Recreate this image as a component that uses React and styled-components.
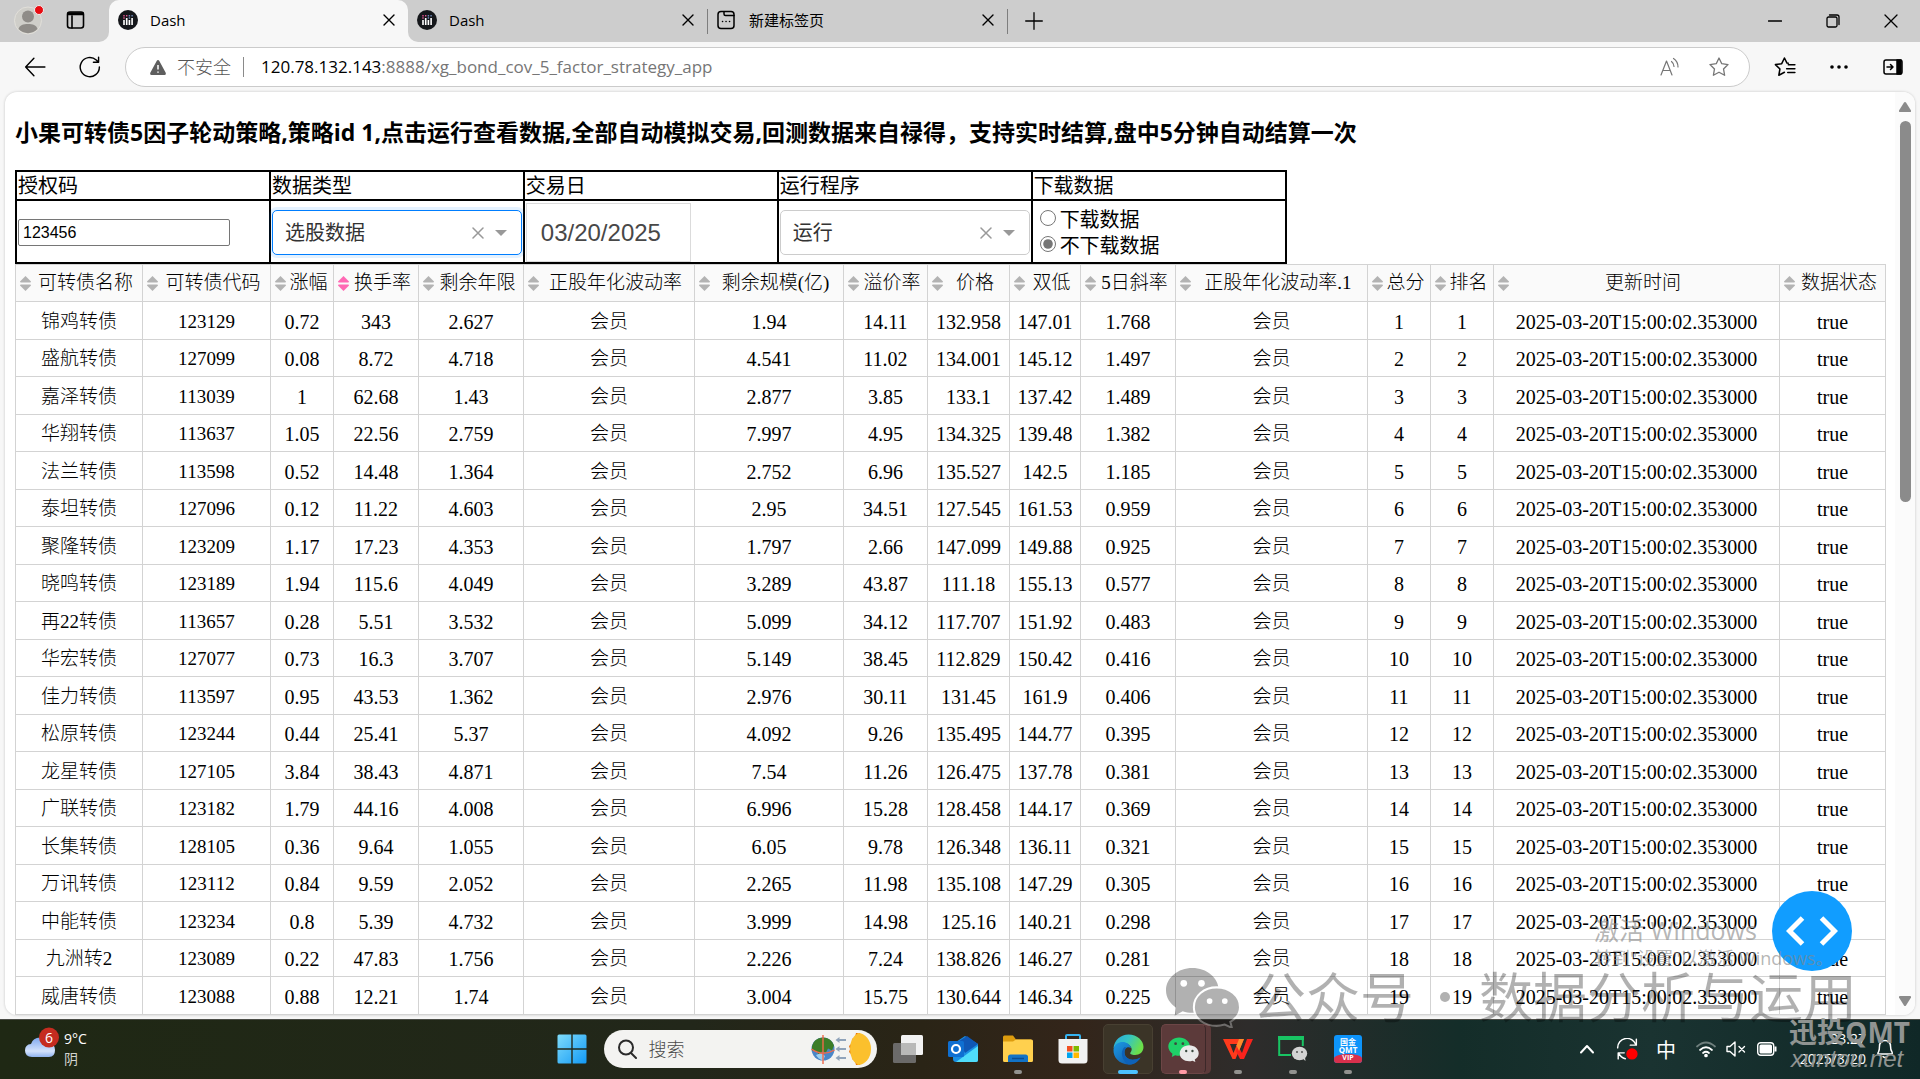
import React, { useState } from "react";
import styled, { createGlobalStyle } from "styled-components";

const ui = `"Open Sans", "Noto Sans CJK SC", sans-serif`;

const GlobalStyle = createGlobalStyle`
  * {
    box-sizing: border-box;
  }

  body {
    margin: 0;
    font-family: ${ui};
    color: #000;
    overflow: hidden;
  }

  button {
    display: flex;
    align-items: center;
    justify-content: center;
    padding: 0;
    border: 0;
    background: transparent;
    color: inherit;
    font-family: inherit;
    flex-shrink: 0;
  }

  svg {
    display: block;
    flex-shrink: 0;
  }
`;

const Desktop = styled.div`
  position: relative;
  display: flex;
  flex-direction: column;
  height: 100vh;
  overflow: hidden;
  background: #f7f7f7;
`;

/* ---------- browser chrome ---------- */

const TabStrip = styled.header`
  display: flex;
  align-items: center;
  flex-shrink: 0;
  height: 42px;
  background: #cdcdcd;
`;

const StripTools = styled.div`
  display: flex;
  align-items: center;
  gap: 21px;
  width: 109px;
  height: 42px;
  padding: 0 0 2px 14px;
  border-radius: 0 0 10px 0;
  background: #cdcdcd;
`;

const Corner = styled.div`
  background: #f7f7f7;
`;

const Tab = styled.div`
  display: flex;
  align-items: center;
  width: 299px;
  height: 42px;
  padding: 0 9px 3px 9px;
  border-radius: ${(props) => (props.$active ? "10px 10px 0 0" : "0")};
  background: ${(props) => (props.$active ? "#f7f7f7" : "transparent")};
  font-size: 15px;
  line-height: 20px;
`;

const TabAfterActive = styled(Tab)`
  border-radius: 0 0 0 10px;
  background: #cdcdcd;
`;

const TabTitle = styled.span`
  flex-grow: 1;
  margin-left: 12px;
`;

const IconButton = styled.button`
  width: ${(props) => props.$w || 20}px;
  height: ${(props) => props.$h || 20}px;
`;

const Separator = styled.span`
  width: 1px;
  height: 25px;
  background: #7e7e7e;
`;

const WindowButtons = styled.div`
  display: flex;
  margin-left: auto;
`;

const Toolbar = styled.div`
  display: flex;
  align-items: center;
  flex-shrink: 0;
  height: 50px;
  padding: 0 0 0 7px;
`;

const AddressBar = styled.div`
  display: flex;
  align-items: center;
  flex-grow: 1;
  height: 40px;
  margin: 0 8px;
  padding: 0 19px 0 24px;
  border: 1px solid #cbcbcb;
  border-radius: 20px;
  background: #fff;
  color: #767676;
  font-size: 17px;
  line-height: 24px;
`;

const Insecure = styled.span`
  margin-left: 11px;
  font-size: 18px;
  font-weight: 300;
  color: #555;
`;

const AddressLine = styled.span`
  width: 1px;
  height: 20px;
  margin: 0 17px 0 12px;
  background: #8a8a8a;
`;

const Url = styled.span`
  flex-grow: 1;

  b {
    font-weight: 400;
    color: #000;
  }
`;

const AddressActions = styled.div`
  display: flex;
  gap: 27px;
`;

const Page = styled.main`
  display: flex;
  flex-grow: 1;
  min-height: 0;
  margin: 0 5px 4px;
  border-radius: 12px;
  background: #fff;
  box-shadow: 0 0 3px rgba(0, 0, 0, 0.2);
  overflow: hidden;
`;

const Content = styled.div`
  flex: 1 1 0;
  min-width: 0;
  padding: 0 10px;
`;

const Scrollbar = styled.div`
  display: flex;
  flex-direction: column;
  align-items: center;
  flex-shrink: 0;
  width: 20px;
  padding: 10px 0 9px;
  background: #fbfbfb;
`;

const Track = styled.div`
  flex-grow: 1;
  width: 11px;
  margin: 9px 0;
`;

const Thumb = styled.div`
  height: 44%;
  border-radius: 6px;
  background: #8b8b8b;
`;

/* ---------- dash page ---------- */

const Title = styled.h3`
  margin: 0;
  padding: 22px 0 20px;
  font-size: 23px;
  line-height: 36px;
  font-weight: 700;
  white-space: nowrap;
`;

const FormTable = styled.table`
  width: 68%;
  table-layout: fixed;
  border: 1px solid #000;
  border-collapse: separate;
  border-spacing: 0;
  font-size: 20px;
  line-height: 26px;

  th,
  td {
    border: 1px solid #000;
    font-weight: 400;
    text-align: left;
  }

  th {
    height: 29px;
    padding: 1px 1px 0;
  }

  td {
    height: 63px;
    padding: 2px 1px 0;
  }
`;

const CodeInput = styled.input`
  display: block;
  width: 212px;
  height: 27px;
  padding: 1px 4px;
  border: 1px solid #767676;
  border-radius: 2px;
  font-family: "Liberation Sans", sans-serif;
  font-size: 16px;
`;

const DateInput = styled.input`
  display: block;
  width: 165px;
  height: 59px;
  padding: 0 14px;
  border: 1px solid #dbdbdb;
  color: #484848;
  font-family: "Liberation Sans", sans-serif;
  font-size: 24px;
`;

const SelectBox = styled.div`
  display: flex;
  align-items: center;
  height: 45px;
  padding-right: 14px;
  border: 1px solid ${(props) => (props.$focused ? "#007eff" : "#ccc")};
  border-radius: 5px;
  box-shadow: ${(props) =>
    props.$focused ? "0 0 0 3px rgba(0, 126, 255, 0.1)" : "none"};
  background: #fff;
`;

const Select = styled.select`
  flex-grow: 1;
  height: 43px;
  padding: 0 12px;
  border: 0;
  outline: 0;
  appearance: none;
  background: transparent;
  color: #333;
  font-family: ${ui};
  font-size: 20px;
`;

const RadioLabel = styled.label`
  display: flex;
  align-items: center;
  height: 26px;
  padding-left: 6px;

  input {
    width: 16px;
    height: 16px;
    margin: 0 4px 3px 0;
    accent-color: #767676;
  }
`;

const DataTable = styled.table`
  width: 100%;
  table-layout: fixed;
  border-collapse: collapse;
  font-family: "Liberation Serif", "Noto Sans CJK SC", serif;
  font-size: 19px;
  font-weight: 300;
  line-height: 24px;

  th,
  td {
    padding: 0;
    border: 1px solid #d3d3d3;
    text-align: center;
    white-space: nowrap;
    font-weight: 300;
  }

  th {
    height: 37px;
    background: #fafafa;
  }

  tbody tr {
    height: 37px;
  }

  tbody tr:nth-child(odd) {
    height: 38px;
  }
`;

const Cell = styled.td`
  && {
    padding-top: 2px;
  }
  font-size: ${(props) => (props.$numeric ? 20 : 19)}px;
`;

const HeadCell = styled.div`
  display: flex;
  align-items: center;
  padding: 0 2px 0 4px;
`;

const HeadText = styled.span`
  flex-grow: 1;
`;

const DebugButton = styled.button`
  position: absolute;
  right: 68px;
  bottom: 108px;
  width: 80px;
  height: 80px;
  border-radius: 50%;
  background: #119dff;
`;

/* ---------- taskbar ---------- */

const Taskbar = styled.footer`
  display: grid;
  grid-template-columns: 1fr auto 1fr;
  align-items: center;
  flex-shrink: 0;
  height: 60px;
  padding-bottom: 1px;
  border-top: 1px solid #4a4c46;
  background: linear-gradient(
    90deg,
    #1f2814 0%,
    #22271a 36%,
    #2a2416 48%,
    #33251a 56%,
    #2e2c2b 65%,
    #142d29 76%,
    #1a3331 86%,
    #102827 100%
  );
  color: #fff;
`;

const Weather = styled.div`
  display: flex;
  align-items: center;
  gap: 5px;
  padding-left: 24px;
  font-size: 14px;
  line-height: 20px;

  svg {
    margin-bottom: 12px;
  }

  span {
    display: block;
    color: #d2d4ce;
  }
`;

const Apps = styled.nav`
  display: flex;
  align-items: center;
`;

const AppButton = styled.button`
  position: relative;
  width: 55px;
  height: 56px;
`;

const AppTile = styled.span`
  display: flex;
  align-items: center;
  justify-content: center;
  width: 50px;
  height: 50px;
  border: 1px solid ${(props) => props.$line || "transparent"};
  border-radius: 5px;
  background: ${(props) => props.$fill || "transparent"};
`;

const StackedTile = styled(AppTile)`
  width: 45px;
  border-right-color: #3c2829;
  box-shadow: 5px 0 0 #5c3a3a;
`;

const Indicator = styled.span`
  position: absolute;
  left: 50%;
  bottom: 3px;
  width: ${(props) => props.$w || 8}px;
  height: 4px;
  transform: translateX(-50%);
  border-radius: 2px;
  background: ${(props) => props.$color || "#92928f"};
`;

const SearchBox = styled.label`
  display: flex;
  align-items: center;
  width: 273px;
  height: 38px;
  margin: 0 4px;
  padding: 0 3px 0 13px;
  border-radius: 19px;
  background: #f3f3f1;

  input {
    flex-grow: 1;
    width: 60px;
    padding: 0 0 0 12px;
    border: 0;
    outline: 0;
    background: transparent;
    font-family: ${ui};
    font-size: 18px;
    font-weight: 300;
  }

  input::placeholder {
    color: #4a4a4a;
  }
`;

const Tray = styled.div`
  display: flex;
  align-items: center;
  justify-content: flex-end;
  padding-right: 25px;
`;

const TrayButton = styled.button`
  width: ${(props) => props.$w || 30}px;
  height: 40px;
  font-size: 20px;
`;

const Clock = styled.div`
  width: 84px;
  font-size: 14px;
  line-height: 20px;
  text-align: right;
  margin-right: 9px;
`;

/* ---------- overlays on the desktop ---------- */

const Overlay = styled.div`
  position: absolute;
  pointer-events: none;
  white-space: nowrap;
`;

const ActivateNote = styled(Overlay)`
  right: 94px;
  bottom: 109px;
  width: 232px;
  color: rgba(135, 135, 135, 0.62);
  font-size: 18px;
  line-height: 24px;

  strong {
    display: block;
    font-size: 25px;
    line-height: 32px;
    font-weight: 400;
  }
`;

const AccountMark = styled(Overlay)`
  display: flex;
  align-items: center;
  right: 63px;
  bottom: 48px;
  opacity: 0.3;
  font-family: "Noto Sans CJK SC", sans-serif;
  font-size: 54px;
  line-height: 64px;

  svg {
    margin-right: 12px;
  }

  i {
    width: 10px;
    height: 10px;
    margin: 0 29px 0 26px;
    border-radius: 50%;
    background: #000;
  }
`;

const MarkText = styled.span`
  padding-bottom: 4px;
`;

const QmtMark = styled(Overlay)`
  right: 10px;
  bottom: 8px;
  color: #909492;
  font-family: "Open Sans", "Noto Sans CJK SC", sans-serif;
  font-size: 28px;
  font-weight: 700;
  line-height: 30px;

  em {
    display: block;
    padding-left: 2px;
    font-family: "Liberation Sans", sans-serif;
    font-size: 24px;
    font-weight: 400;
    line-height: 24px;
  }
`;

const columns = [
  ["可转债名称", 127],
  ["可转债代码", 128],
  ["涨幅", 63],
  ["换手率", 85],
  ["剩余年限", 105],
  ["正股年化波动率", 171],
  ["剩余规模(亿)", 149],
  ["溢价率", 84],
  ["价格", 82],
  ["双低", 71],
  ["5日斜率", 95],
  ["正股年化波动率.1", 192],
  ["总分", 63],
  ["排名", 63],
  ["更新时间", 286],
  ["数据状态", 106],
];

const textColumns = ["可转债名称", "可转债代码", "正股年化波动率", "正股年化波动率.1"];

const bonds = [
  ["锦鸡转债", "123129", "0.72", "343", "2.627", "1.94", "14.11", "132.958", "147.01", "1.768"],
  ["盛航转债", "127099", "0.08", "8.72", "4.718", "4.541", "11.02", "134.001", "145.12", "1.497"],
  ["嘉泽转债", "113039", "1", "62.68", "1.43", "2.877", "3.85", "133.1", "137.42", "1.489"],
  ["华翔转债", "113637", "1.05", "22.56", "2.759", "7.997", "4.95", "134.325", "139.48", "1.382"],
  ["法兰转债", "113598", "0.52", "14.48", "1.364", "2.752", "6.96", "135.527", "142.5", "1.185"],
  ["泰坦转债", "127096", "0.12", "11.22", "4.603", "2.95", "34.51", "127.545", "161.53", "0.959"],
  ["聚隆转债", "123209", "1.17", "17.23", "4.353", "1.797", "2.66", "147.099", "149.88", "0.925"],
  ["晓鸣转债", "123189", "1.94", "115.6", "4.049", "3.289", "43.87", "111.18", "155.13", "0.577"],
  ["再22转债", "113657", "0.28", "5.51", "3.532", "5.099", "34.12", "117.707", "151.92", "0.483"],
  ["华宏转债", "127077", "0.73", "16.3", "3.707", "5.149", "38.45", "112.829", "150.42", "0.416"],
  ["佳力转债", "113597", "0.95", "43.53", "1.362", "2.976", "30.11", "131.45", "161.9", "0.406"],
  ["松原转债", "123244", "0.44", "25.41", "5.37", "4.092", "9.26", "135.495", "144.77", "0.395"],
  ["龙星转债", "127105", "3.84", "38.43", "4.871", "7.54", "11.26", "126.475", "137.78", "0.381"],
  ["广联转债", "123182", "1.79", "44.16", "4.008", "6.996", "15.28", "128.458", "144.17", "0.369"],
  ["长集转债", "128105", "0.36", "9.64", "1.055", "6.05", "9.78", "126.348", "136.11", "0.321"],
  ["万讯转债", "123112", "0.84", "9.59", "2.052", "2.265", "11.98", "135.108", "147.29", "0.305"],
  ["中能转债", "123234", "0.8", "5.39", "4.732", "3.999", "14.98", "125.16", "140.21", "0.298"],
  ["九洲转2", "123089", "0.22", "47.83", "1.756", "2.226", "7.24", "138.826", "146.27", "0.281"],
  ["威唐转债", "123088", "0.88", "12.21", "1.74", "3.004", "15.75", "130.644", "146.34", "0.225"],
];

const toRow = (bond, i) => [
  ...bond.slice(0, 5),
  "会员",
  ...bond.slice(5),
  "会员",
  i + 1,
  i + 1,
  "2025-03-20T15:00:02.353000",
  "true",
];

/* ---------- icons ---------- */

const Line = ({ size = 20, w = 1.3, box = 20, children, color = "currentColor" }) => (
  <svg
    width={size}
    height={size}
    viewBox={`0 0 ${box} ${box}`}
    fill="none"
    stroke={color}
    strokeWidth={w}
    strokeLinecap="round"
    strokeLinejoin="round"
  >
    {children}
  </svg>
);

const CloseIcon = () => (
  <Line size={12} box={12} w={1.4}>
    <path d="M1 1l10 10M11 1L1 11" />
  </Line>
);

const DashIcon = () => (
  <svg width="20" height="20" viewBox="0 0 20 20">
    <circle cx="10" cy="10" r="10" fill="#15171b" />
    <path d="M6 10v5M8.7 8v7M11.4 10v5M14.1 8v7" stroke="#fff" strokeWidth="1.6" />
    <path d="M5.3 5.7h1.4M8 5.7h1.4M5.3 8h1.4" stroke="#e0568f" strokeWidth="1.4" />
    <path d="M10.7 5.7h1.4M13.4 5.7h1.4M10.7 8h1.4" stroke="#6d88b8" strokeWidth="1.4" />
  </svg>
);

const ProfileIcon = () => (
  <svg width="31" height="31" viewBox="0 0 31 31">
    <circle cx="14" cy="15.5" r="13.5" fill="#cfcec9" stroke="#e2e0da" />
    <circle cx="14" cy="11.5" r="6" fill="#8f8c88" />
    <path d="M4.5 24c1-4 5-5 9.5-5s8.5 1 9.5 5a13 13 0 0 1-19 0z" fill="#8f8c88" />
    <circle cx="25" cy="5" r="4.500" fill="#e80c12" stroke="#eee" />
  </svg>
);

const Sorter = ({ active }) => (
  <svg width="11" height="15" viewBox="0 0 11 15" fill={active ? "#ff69b4" : "#b3b3b3"}>
    <path d="M5.5 0L11 5.5Q11 6.5 10 6.5H1Q0 6.5 0 5.5z" />
    <path d="M5.5 15L0 9.5Q0 8.5 1 8.5H10Q11 8.5 11 9.5z" />
  </svg>
);

const WechatShape = ({ size, big, small, gap, eye }) => (
  <svg width={size} height={Math.round((size * 60) / 73)} viewBox="0 0 73 60">
    <path
      fill={big}
      d="M26 1C12 1 0 10.5 0 23c0 7 4 13 10 17l-1.5 8 8-4.5c3 1 6 1.5 9.5 1.5C40 45 52 35.5 52 23S40 1 26 1z"
    />
    <circle cx="17.5" cy="16" r="3.3" fill={eye} />
    <circle cx="35" cy="16" r="3.3" fill={eye} />
    <path
      fill={small}
      stroke={gap}
      strokeWidth="2"
      d="M50 20c-12.5 0-22.5 8.5-22.5 19.5S37.5 58 50 58c3 0 5-.5 8-1.300l7 3.300-1.500-6c6-3.500 9.500-8.500 9.500-14.500C73 28.500 62.500 20 50 20z"
    />
    <circle cx="43" cy="33.500" r="2.800" fill={eye} />
    <circle cx="58" cy="33.500" r="2.800" fill={eye} />
  </svg>
);

const StarPath = "M10 1.800l2.500 5.200 5.700.8-4.100 4 1 5.700-5.100-2.700-5.100 2.700 1-5.700-4.100-4 5.700-.8z";

const StartIcon = () => (
  <svg width="30" height="30" viewBox="0 0 30 30">
    <defs>
      <linearGradient id="win" x1="0" y1="0" x2="1" y2="1">
        <stop offset="0" stopColor="#7fdcfb" />
        <stop offset="1" stopColor="#1299f5" />
      </linearGradient>
    </defs>
    <path
      fill="url(#win)"
      d="M2 .5h12.300v13.800H.5V2Q.5.5 2 .5zM15.700.5H28Q29.500.5 29.500 2v12.300H15.700zM.5 15.700h13.800v13.800H2Q.5 29.500.5 28zM15.700 15.700h13.800V28q0 1.500-1.500 1.500H15.700z"
    />
  </svg>
);

const EquinoxArt = () => (
  <svg width="64" height="34" viewBox="0 0 64 34">
    <circle cx="13" cy="17" r="11.500" fill="#4a86c8" />
    <path d="M2 14Q4 6 13 5.500q8 0 11 8l-2 5-4-2-2 4-4-1-3 4-2-4-5-1z" fill="#3c7d28" />
    <path d="M6 23l5-2 4 3-2 4.500Q8 27 6 23z" fill="#9bd0ef" />
    <path d="M13 3v29M1.500 17q11 8 23 1" stroke="#f0694a" strokeWidth="1.400" fill="none" />
    <path d="M28 8h8M28 17h8M28 26h8" stroke="#8fa3ba" strokeWidth="2.200" />
    <path d="M29.500 5l-4 3 4 3zM29.500 14l-4 3 4 3zM29.500 23l-4 3 4 3z" fill="#8fa3ba" />
    <path d="M50 1h-4l-1 4-3 2v4l-3 3 1 3-1 3 3 3v4l3 2 1 4h4z" fill="#e8720c" />
    <path d="M48 1a13 16 0 0 1 0 32q-8-5-8-16t8-16z" fill="#fbc02d" />
  </svg>
);

const TaskViewIcon = () => (
  <svg width="30" height="28" viewBox="0 0 30 28">
    <rect x="0" y="8" width="23" height="20" rx="1.500" fill="#6b6a69" />
    <rect x="8" y="0" width="22" height="20" rx="1.500" fill="#f2f2f2" />
    <path d="M8 8h15v12H8z" fill="#b9b9b8" />
  </svg>
);

const OutlookIcon = () => (
  <svg width="30" height="28" viewBox="0 0 30 28">
    <path d="M5 9L17 1l13 8v16q0 2-2 2H8q-3 0-3-3z" fill="#1a8fe3" />
    <path d="M11 6l8-5 11 8-13 9z" fill="#0f57b5" />
    <path d="M30 11v14q0 2-2 2H8z" fill="#4fdcfa" />
    <rect y="6" width="16" height="16" rx="1.500" fill="#0f6fd1" />
    <circle cx="8" cy="14" r="4" fill="none" stroke="#fff" strokeWidth="2.200" />
  </svg>
);

const FolderIcon = () => (
  <svg width="30" height="28" viewBox="0 0 30 28">
    <path d="M0 2Q0 .5 1.500.5H10l3 4h15V12H0z" fill="#dd9c0e" />
    <path d="M0 6.500h10l3-2h15.500Q30 4.500 30 6v19.500q0 1.500-1.500 1.500h-27Q0 27 0 25.500z" fill="#ffd04e" />
    <path d="M5 27v-5q0-2.500 2.500-2.500h15Q25 19.500 25 22v5z" fill="#1273c6" />
    <path d="M9 23.500h12" stroke="#0a4c92" strokeWidth="1.500" />
  </svg>
);

const StoreIcon = () => (
  <svg width="30" height="30" viewBox="0 0 30 30">
    <path d="M8 8V2q0-1 1-1h12q1 0 1 1v6" fill="none" stroke="#35b3f0" strokeWidth="2" />
    <path d="M.5 5h29v21q0 3.500-3.500 3.500H4Q.5 29.500.5 26z" fill="#f2f2f2" />
    <path d="M9 12h5.500v5.500H9z" fill="#f25022" />
    <path d="M15.500 12H21v5.500h-5.500z" fill="#7fba00" />
    <path d="M9 18.500h5.500V24H9z" fill="#00a4ef" />
    <path d="M15.500 18.500H21V24h-5.500z" fill="#ffb900" />
  </svg>
);

const EdgeIcon = () => (
  <svg width="31" height="31" viewBox="0 0 31 31">
    <defs>
      <linearGradient id="edgeTop" x1="0" y1="0" x2="1" y2="0.4">
        <stop offset="0" stopColor="#2aa7dd" />
        <stop offset="0.5" stopColor="#34c5c4" />
        <stop offset="1" stopColor="#6be04a" />
      </linearGradient>
      <linearGradient id="edgeLow" x1="0" y1="0" x2="1" y2="1">
        <stop offset="0" stopColor="#1b9be6" />
        <stop offset="1" stopColor="#114f9c" />
      </linearGradient>
    </defs>
    <path
      d="M.5 14.500C1 6 8 .5 15.500.5 24 .5 30.500 6.500 30.500 13c0 5-4 8-8.500 8-3.500 0-5.500-1-4.500-2.500 1.500-2 1.500-3.500.5-5.500C14 6.500 4 8.500.5 14.500z"
      fill="url(#edgeTop)"
    />
    <path
      d="M.5 15.500C1.500 9 8 7 12.500 8.500c3.500 1.200 5.500 3.500 5.500 5.500-4-2-7 1-6.500 5C12 25 19 28 27.500 23.500 24 29 19.500 31 15 30.500 6.500 30 0 23.500.5 15.500z"
      fill="url(#edgeLow)"
    />
    <path d="M11.500 13c-5 5-2.500 14 4 17.500 5 .3 9-2 12-7C19 28 12 25 11.500 19q-.3-3.500 2-5.500z" fill="#0d62b8" />
  </svg>
);

const WpsIcon = () => (
  <svg width="30" height="22" viewBox="0 0 30 22">
    <path d="M0 1h17l-2 5H7l3.500 9L16 1h5l-8.500 20H9.500z" fill="#ff3a1c" />
    <path d="M15 8l4 7 5-14h6l-9 20h-4l-4-8z" fill="#f9231c" />
    <path d="M21 1h-5l-2.500 6.500L16 13z" fill="#ff8a2a" />
  </svg>
);

const ChatWindowIcon = () => (
  <svg width="30" height="26" viewBox="0 0 30 26">
    <path d="M13 19H1.200V1.200h23.600V10" fill="none" stroke="#18c463" strokeWidth="2" />
    <path d="M0 0h26v4H0z" fill="#18c463" />
    <ellipse cx="21.500" cy="17.500" rx="7.700" ry="6.700" fill="#d3d3d3" />
    <path d="M24 22l3.500 3-.5-4z" fill="#d3d3d3" />
    <circle cx="19" cy="16" r="1" fill="#555" />
    <circle cx="24" cy="16" r="1" fill="#555" />
  </svg>
);

const QmtTile = styled.span`
  display: flex;
  flex-direction: column;
  align-items: center;
  width: 28px;
  height: 28px;
  padding-top: 3px;
  border-radius: 3px;
  overflow: hidden;
  background: #0d94fa;
  color: #fff;
  font-size: 8px;
  font-weight: 700;
  line-height: 8px;
`;

const Ribbon = styled.span`
  width: 28px;
  height: 9px;
  margin-top: auto;
  border-radius: 50% 50% 0 0;
  background: #d7304c;
  font-size: 7px;
`;

const CloudIcon = () => (
  <svg width="35" height="32" viewBox="0 0 35 32">
    <defs>
      <linearGradient id="cloud" x1="0" y1="0" x2="0" y2="1">
        <stop offset="0" stopColor="#7fa8ee" />
        <stop offset="0.7" stopColor="#d3e2fc" />
        <stop offset="1" stopColor="#8fb3f0" />
      </linearGradient>
    </defs>
    <path
      d="M8 30q-7-.5-7-6.500T7 17q2-6.500 9-6.500 6 0 8 6 7-.5 7 6.500t-6 7z"
      fill="url(#cloud)"
    />
    <circle cx="25" cy="10.500" r="10" fill="#c52c20" />
    <text x="25" y="15.500" textAnchor="middle" fontSize="14" fill="#fff">
      6
    </text>
  </svg>
);

const Picker = ({ label, focused, value }) => (
  <SelectBox $focused={focused}>
    <Select aria-label={label} defaultValue={value}>
      <option>{value}</option>
    </Select>
    <IconButton aria-label="清除" $w={16}>
      <Line size={12} box={12} w={1.5} color="#999">
        <path d="M1 1l10 10M11 1L1 11" />
      </Line>
    </IconButton>
    <Caret width="12" height="6" viewBox="0 0 12 6">
      <path d="M0 0h12L6 6z" fill="#999" />
    </Caret>
  </SelectBox>
);

const Caret = styled.svg`
  margin-left: 9px;
`;

const App = () => {
  const [download, setDownload] = useState("no");

  return (
    <Desktop>
      <GlobalStyle />

      <TabStrip>
        <Corner>
          <StripTools>
            <ProfileIcon />
            <Line w={1.6}>
              <rect x="1.500" y="2" width="16" height="16" rx="2.500" />
              <path d="M2 4.500h15M2 3h15M6 6v12" />
            </Line>
          </StripTools>
        </Corner>
        <Tab $active>
          <DashIcon />
          <TabTitle>Dash</TabTitle>
          <IconButton aria-label="关闭">
            <CloseIcon />
          </IconButton>
        </Tab>
        <Corner>
          <TabAfterActive>
            <DashIcon />
            <TabTitle>Dash</TabTitle>
            <IconButton aria-label="关闭">
              <CloseIcon />
            </IconButton>
          </TabAfterActive>
        </Corner>
        <Separator />
        <Tab>
          <Line w={1.5}>
            <rect x="1" y="1.500" width="16" height="17" rx="3" />
            <path d="M7 2v2q0 1.500 1.500 1.500H17M5.500 11.500h.1M9 11.500h.1M12.500 11.500h.1" />
          </Line>
          <TabTitle>新建标签页</TabTitle>
          <IconButton aria-label="关闭">
            <CloseIcon />
          </IconButton>
        </Tab>
        <Separator />
        <IconButton aria-label="新建标签页" $w={52}>
          <Line size={18} box={18}>
            <path d="M9 .7v16.600M.7 9h16.600" />
          </Line>
        </IconButton>
        <WindowButtons>
          <IconButton aria-label="最小化" $w={58}>
            <Line size={14} box={14}>
              <path d="M.5 7h13" />
            </Line>
          </IconButton>
          <IconButton aria-label="还原" $w={58}>
            <Line size={14} box={14}>
              <rect x="1" y="3" width="10" height="10" rx="1.500" />
              <path d="M3.500 1h7.500q2 0 2 2v7.500" />
            </Line>
          </IconButton>
          <IconButton aria-label="关闭窗口" $w={58}>
            <Line size={14} box={14}>
              <path d="M1 1l12 12M13 1L1 13" />
            </Line>
          </IconButton>
        </WindowButtons>
      </TabStrip>

      <Toolbar>
        <IconButton aria-label="返回" $w={55}>
          <Line size={22}>
            <path d="M19 10H1.500M9 2L1.500 10 9 18" />
          </Line>
        </IconButton>
        <IconButton aria-label="刷新" $w={55}>
          <Line size={22}>
            <path d="M18.500 10a8.700 8.700 0 1 1-2.800-6.300L17.500 5.500M17.800 1v4.700h-4.700" />
          </Line>
        </IconButton>
        <AddressBar>
          <svg width="16" height="15" viewBox="0 0 16 15">
            <path d="M8 0q.8 0 1.200.8l6.500 12q.6 2.200-1.200 2.200h-13Q-.3 15 .3 12.800l6.500-12Q7.200 0 8 0z" fill="#5e5e5e" />
            <path d="M8 5v4.500M8 11.500v1.300" stroke="#fff" strokeWidth="1.500" />
          </svg>
          <Insecure>不安全</Insecure>
          <AddressLine />
          <Url>
            <b>120.78.132.143</b>:8888/xg_bond_cov_5_factor_strategy_app
          </Url>
          <AddressActions>
            <IconButton aria-label="朗读" $w={22}>
              <Line w={1.2}>
                <path d="M1 18L6.500 4 12 18M3 13.500h7M11.500 4.500q2.500 2 2.500 5M13.500 1.500q4.500 3 4.500 8.500" />
              </Line>
            </IconButton>
            <IconButton aria-label="收藏" $w={22}>
              <Line size={22} w={1.2}>
                <path d={StarPath} />
              </Line>
            </IconButton>
          </AddressActions>
        </AddressBar>
        <IconButton aria-label="收藏夹" $w={54}>
          <Line size={22} w={1.4}>
            <path d="M13 6.500L11.800 6.400 9.500 1.800 7 7l-5.700.8 4.100 4-1 5.700 5.100-2.700M13 8h6M11.500 11.500H19M12.500 15H19" />
          </Line>
        </IconButton>
        <IconButton aria-label="更多" $w={54}>
          <svg width="18" height="4" viewBox="0 0 18 4">
            <circle cx="2" cy="2" r="1.800" />
            <circle cx="9" cy="2" r="1.800" />
            <circle cx="16" cy="2" r="1.800" />
          </svg>
        </IconButton>
        <IconButton aria-label="侧边栏" $w={54}>
          <Line w={1.5}>
            <rect x="1" y="3" width="18" height="14" rx="2" />
            <path d="M14 3h4v14h-4z" fill="#000" />
            <path d="M4 10h6M7.500 7.500L10 10l-2.500 2.500" />
          </Line>
        </IconButton>
      </Toolbar>

      <Page>
        <Content>
          <Title>
            小果可转债5因子轮动策略,策略id 1,点击运行查看数据,全部自动模拟交易,回测数据来自禄得，支持实时结算,盘中5分钟自动结算一次
          </Title>

          <FormTable>
            <thead>
              <tr>
                <th>授权码</th>
                <th>数据类型</th>
                <th>交易日</th>
                <th>运行程序</th>
                <th>下载数据</th>
              </tr>
            </thead>
            <tbody>
              <tr>
                <td>
                  <CodeInput aria-label="授权码" defaultValue="123456" />
                </td>
                <td>
                  <Picker label="数据类型" value="选股数据" focused />
                </td>
                <td>
                  <DateInput aria-label="交易日" defaultValue="03/20/2025" />
                </td>
                <td>
                  <Picker label="运行程序" value="运行" />
                </td>
                <td>
                  <RadioLabel>
                    <input
                      type="radio"
                      name="download"
                      checked={download === "yes"}
                      onChange={() => setDownload("yes")}
                    />
                    下载数据
                  </RadioLabel>
                  <RadioLabel>
                    <input
                      type="radio"
                      name="download"
                      checked={download === "no"}
                      onChange={() => setDownload("no")}
                    />
                    不下载数据
                  </RadioLabel>
                </td>
              </tr>
            </tbody>
          </FormTable>

          <DataTable>
            <colgroup>
              {columns.map(([name, width]) => (
                <col key={name} style={{ width }} />
              ))}
            </colgroup>
            <thead>
              <tr>
                {columns.map(([name]) => (
                  <th key={name}>
                    <HeadCell>
                      <Sorter active={name === "换手率"} />
                      <HeadText>{name}</HeadText>
                    </HeadCell>
                  </th>
                ))}
              </tr>
            </thead>
            <tbody>
              {bonds.map((bond, i) => (
                <tr key={bond[1]}>
                  {toRow(bond, i).map((value, j) => (
                    <Cell
                      key={columns[j][0]}
                      $numeric={!textColumns.includes(columns[j][0])}
                    >
                      {value}
                    </Cell>
                  ))}
                </tr>
              ))}
            </tbody>
          </DataTable>
        </Content>
        <Scrollbar>
          <svg width="12" height="10" viewBox="0 0 12 10">
            <path d="M6 0q.6 0 1 .6l5 8q.3 1.400-1 1.400H1Q-.3 10 0 8.600l5-8Q5.400 0 6 0z" fill="#8b8b8b" />
          </svg>
          <Track>
            <Thumb />
          </Track>
          <svg width="12" height="10" viewBox="0 0 12 10">
            <path d="M6 10q-.6 0-1-.6l-5-8Q-.3 0 1 0h10q1.300 0 1 1.400l-5 8q-.4.6-1 .6z" fill="#8b8b8b" />
          </svg>
        </Scrollbar>
      </Page>

      <Taskbar>
        <Weather>
          <CloudIcon />
          <div>
            9°C
            <span>阴</span>
          </div>
        </Weather>
        <Apps>
          <AppButton aria-label="开始">
            <StartIcon />
          </AppButton>
          <SearchBox>
            <Line size={20} w={2} color="#2b2b2b">
              <circle cx="9" cy="8.500" r="7" />
              <path d="M14 14l5 5" />
            </Line>
            <input placeholder="搜索" aria-label="搜索" />
            <EquinoxArt />
          </SearchBox>
          <AppButton aria-label="任务视图">
            <TaskViewIcon />
          </AppButton>
          <AppButton aria-label="Outlook">
            <OutlookIcon />
          </AppButton>
          <AppButton aria-label="文件资源管理器">
            <FolderIcon />
            <Indicator />
          </AppButton>
          <AppButton aria-label="Store">
            <StoreIcon />
          </AppButton>
          <AppButton aria-label="Edge">
            <AppTile $fill="#3b3427" $line="#484032">
              <EdgeIcon />
            </AppTile>
            <Indicator $w={20} $color="#4cc2ff" />
          </AppButton>
          <AppButton aria-label="微信">
            <StackedTile $fill="#5c3a3a" $line="#6c4646">
              <WechatShape size={31} big="#1fd168" small="#e9e9e9" gap="none" eye="#3a4a3f" />
            </StackedTile>
            <Indicator $color="#ff9aa5" />
          </AppButton>
          <AppButton aria-label="WPS">
            <WpsIcon />
            <Indicator />
          </AppButton>
          <AppButton aria-label="微信窗口">
            <ChatWindowIcon />
            <Indicator />
          </AppButton>
          <AppButton aria-label="国金QMT">
            <QmtTile>
              <span>国金</span>
              <span>QMT</span>
              <Ribbon>VIP</Ribbon>
            </QmtTile>
            <Indicator />
          </AppButton>
        </Apps>
        <Tray>
          <TrayButton aria-label="隐藏的图标" $w={54}>
            <Line size={14} box={14} w={2}>
              <path d="M1 10.500l6-6.500 6 6.500" />
            </Line>
          </TrayButton>
          <TrayButton aria-label="同步" $w={26}>
            <Line size={22}>
              <path d="M1.500 9A8.500 8.500 0 0 1 18 6M18.500 1v5.500H13M2 19v-5.500h5.500M2.500 14q2 4 6 4.800" />
              <circle cx="14.500" cy="14.500" r="4.500" fill="#f00" stroke="#f00" />
            </Line>
          </TrayButton>
          <TrayButton $w={52}>中</TrayButton>
          <TrayButton aria-label="网络" $w={28}>
            <Line w={1.7}>
              <path d="M1 7.500q9-8 18 0" stroke="#6f7f7d" />
              <path d="M4 11q6-5.500 12 0M7 14q3-2.500 6 0" />
              <circle cx="10" cy="16.500" r="1" fill="#fff" />
            </Line>
          </TrayButton>
          <TrayButton aria-label="音量" $w={32}>
            <Line w={1.4}>
              <path d="M1 7.500h3L9 3v14l-5-4.500H1zM13 7.500l5.500 5.500M18.500 7.500L13 13" />
            </Line>
          </TrayButton>
          <TrayButton aria-label="电池">
            <svg width="20" height="14" viewBox="0 0 20 14">
              <rect x=".7" y=".7" width="16" height="12.600" rx="3" fill="none" stroke="#fff" strokeWidth="1.400" />
              <rect x="2.500" y="2.500" width="12.500" height="9" rx="1.500" fill="#fff" />
              <path d="M18.500 4.500v5" stroke="#fff" strokeWidth="2" />
            </svg>
          </TrayButton>
          <Clock>
            23:27
            <br />
            2025/3/20
          </Clock>
          <IconButton aria-label="通知">
            <Line w={1.5}>
              <path d="M3.500 13q1-2 1-6a5.500 5.500 0 0 1 11 0q0 4 1.500 6 1 2-1 2H4q-2 0-.5-2zM8 17.500q2 2 4 0" />
            </Line>
          </IconButton>
        </Tray>
      </Taskbar>

      <DebugButton aria-label="调试">
        <svg width="52" height="30" viewBox="0 0 52 30" fill="none" stroke="#fff" strokeWidth="5">
          <path d="M16.500 2L3.500 15l13 13M35.500 2l13 13-13 13" />
        </svg>
      </DebugButton>
      <ActivateNote>
        <strong>激活 Windows</strong>
        转到"设置"以激活 Windows。
      </ActivateNote>
      <AccountMark>
        <WechatShape size={74} big="#000" small="#000" gap="#fff" eye="#fff" />
        <MarkText>公众号</MarkText>
        <i />
        <MarkText>数据分析与运用</MarkText>
      </AccountMark>
      <QmtMark>
        迅投QMT
        <em>xuntou.net</em>
      </QmtMark>
    </Desktop>
  );
};

export default App;
